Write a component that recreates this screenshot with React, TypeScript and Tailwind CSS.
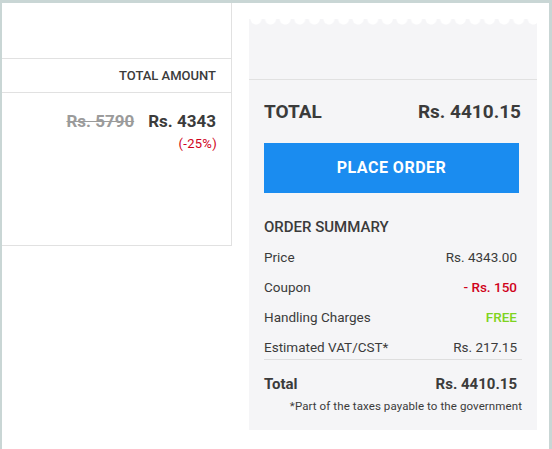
import React from 'react';

type SummaryRow = { label: string; value: string; tone?: 'red' | 'green' };

const rows: SummaryRow[] = [
  { label: 'Price', value: 'Rs. 4343.00' },
  { label: 'Coupon', value: '- Rs. 150', tone: 'red' },
  { label: 'Handling Charges', value: 'FREE', tone: 'green' },
  { label: 'Estimated VAT/CST*', value: 'Rs. 217.15' },
];

const toneClass = (tone?: SummaryRow['tone']) => {
  if (tone === 'red') return 'text-[#d0021b] font-medium';
  if (tone === 'green') return 'text-[#7ed321] font-medium';
  return '';
};

export default function App() {
  return (
    <div className="flex h-[449px] w-[552px] border-t-[3px] border-l-2 border-r-[3px] border-[#c9d6d5] bg-white font-['Roboto',sans-serif] text-[#3b3b3b]">
      {/* Cart item card (cut off on the left) */}
      <div className="flex h-[243px] w-[230px] flex-col border-r border-b border-[#e1e1e1]">
        <div className="h-[56px] border-b border-[#e1e1e1]" />
        <div className="flex h-[34px] items-center justify-end border-b border-[#e1e1e1] pr-[15px] text-[13px] font-medium">
          TOTAL AMOUNT
        </div>
        <div className="flex flex-col items-end pt-[18px] pr-[15px]">
          <div className="flex gap-[14px] text-[17px] font-bold leading-[20px]">
            <span className="text-[#9b9b9b] line-through">Rs. 5790</span>
            <span>Rs. 4343</span>
          </div>
          <span className="mt-[6px] mr-[-1px] text-[13px] leading-[14px] tracking-[0.3px] text-[#d0021b]">(-25%)</span>
        </div>
      </div>

      {/* Order summary panel */}
      <div className="mt-[16px] ml-[17px] flex h-[411px] w-[288px] flex-col bg-[#f5f5f7]">
        <div className="h-[61px] border-b border-[#e1e1e1]">
          <div className="h-[6px] bg-[radial-gradient(circle_at_7px_0,#ffffff_5px,#f5f5f7_6px)] bg-[length:14.6px_6px] bg-repeat-x" />
        </div>

        <div className="px-[15px]">
          <div className="mt-[21px] flex h-[22px] items-center justify-between pr-[1px] text-[19px] font-bold">
            <span>TOTAL</span>
            <span>Rs. 4410.15</span>
          </div>

          <button className="mt-[20px] flex h-[50px] w-[255px] items-center justify-center bg-[#1a8cf0] text-[16px] font-bold tracking-[0.5px] text-white">
            PLACE ORDER
          </button>

          <p className="mt-[24px] text-[15px] font-medium leading-[20px]">ORDER SUMMARY</p>

          <div className="mt-[10px] flex flex-col gap-[10px] border-b border-[#dedede] pb-[2px] pr-[5px] text-[13.5px] leading-[20px]">
            {rows.map((row) => (
              <div key={row.label} className="flex justify-between">
                <span>{row.label}</span>
                <span className={toneClass(row.tone)}>{row.value}</span>
              </div>
            ))}
          </div>

          <div className="mt-[14px] flex justify-between pr-[5px] text-[15px] font-bold leading-[20px]">
            <span>Total</span>
            <span>Rs. 4410.15</span>
          </div>
          <p className="mt-[5px] text-right text-[11.5px] leading-[14px] tracking-[0.1px]">*Part of the taxes payable to the government</p>
        </div>
      </div>
    </div>
  );
}
